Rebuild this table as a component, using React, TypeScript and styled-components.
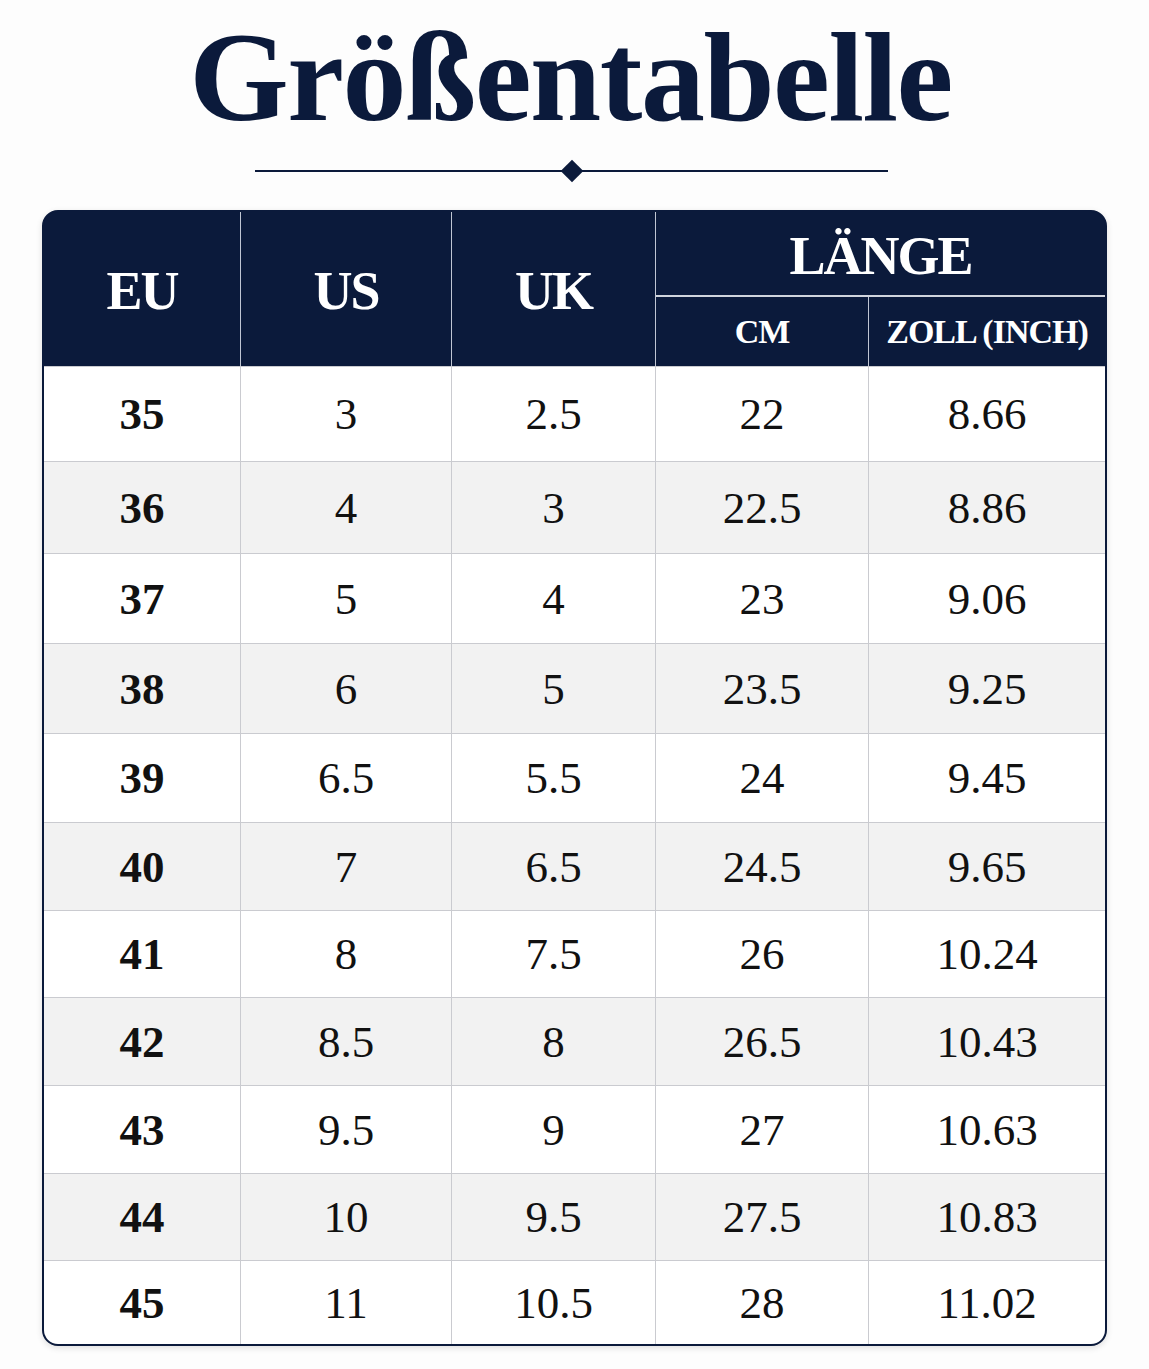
import React from "react";
import styled, { createGlobalStyle } from "styled-components";

const NAVY = "#0b1a3b";

const GlobalStyle = createGlobalStyle`
  html, body {
    margin: 0;
    padding: 0;
    background: #fdfdfd;
  }
  body {
    font-family: "Liberation Serif", "Times New Roman", serif;
  }
`;

const Page = styled.div`
  width: 1149px;
  padding-top: 13px;
  padding-bottom: 21px;
  display: flex;
  flex-direction: column;
  align-items: center;
`;

const Title = styled.h1`
  margin: 0;
  padding-right: 8px;
  font-family: "Liberation Serif", "Times New Roman", serif;
  font-size: 128px;
  line-height: 1;
  font-weight: 700;
  color: ${NAVY};
  letter-spacing: -1.5px;
`;

const Divider = styled.div`
  margin-top: 18px;
  width: 633px;
  height: 24px;
  display: flex;
  align-items: center;
  justify-content: center;
  position: relative;
  transform: translateX(-3px);

  &::before {
    content: "";
    position: absolute;
    left: 0;
    right: 0;
    top: 11px;
    height: 2px;
    background: ${NAVY};
  }
`;

const Diamond = styled.span`
  width: 16px;
  height: 16px;
  background: ${NAVY};
  transform: rotate(45deg);
  position: relative;
`;

const Table = styled.div`
  margin-top: 27px;
  align-self: flex-start;
  margin-left: 42px;
  width: 1065px;
  box-sizing: border-box;
  border: 2px solid ${NAVY};
  border-radius: 16px;
  overflow: hidden;
  background: ${NAVY};
  box-shadow: 0 2px 6px rgba(0, 0, 0, 0.12);
  display: grid;
  grid-template-columns: 197px 211px 204px 213px 1fr;
  grid-template-rows: 85px 69px;
  grid-auto-rows: auto;
`;

const Head = styled.div<{ $span?: string; $rows?: string; $size: number; $last?: boolean; $bottom?: boolean }>`
  grid-column: ${(p) => p.$span || "auto"};
  grid-row: ${(p) => p.$rows || "auto"};
  box-sizing: border-box;
  background: ${NAVY};
  color: #fff;
  font-weight: 700;
  font-size: ${(p) => p.$size}px;
  letter-spacing: ${(p) => (p.$size > 40 ? "-2px" : "-1px")};
  display: flex;
  align-items: center;
  justify-content: center;
  padding-top: ${(p) => (p.$size > 40 ? "4px" : "0")};
  border-right: ${(p) => (p.$last ? "none" : "1.5px solid rgba(225, 229, 238, 0.85)")};
  border-bottom: ${(p) => (p.$bottom ? "2px solid rgba(230, 233, 240, 0.9)" : "none")};
  white-space: nowrap;
`;

const Cell = styled.div<{ $alt: boolean; $bold?: boolean; $last?: boolean; $h: number }>`
  height: ${(p) => p.$h}px;
  box-sizing: border-box;
  background: ${(p) => (p.$alt ? "#f2f2f2" : "#ffffff")};
  border-top: 1px solid #cacbd0;
  border-right: ${(p) => (p.$last ? "none" : "1px solid #cacbd0")};
  color: #111;
  font-size: 45px;
  font-weight: ${(p) => (p.$bold ? 700 : 400)};
  display: flex;
  align-items: center;
  justify-content: center;
`;

const rows: string[][] = [
  ["35", "3", "2.5", "22", "8.66"],
  ["36", "4", "3", "22.5", "8.86"],
  ["37", "5", "4", "23", "9.06"],
  ["38", "6", "5", "23.5", "9.25"],
  ["39", "6.5", "5.5", "24", "9.45"],
  ["40", "7", "6.5", "24.5", "9.65"],
  ["41", "8", "7.5", "26", "10.24"],
  ["42", "8.5", "8", "26.5", "10.43"],
  ["43", "9.5", "9", "27", "10.63"],
  ["44", "10", "9.5", "27.5", "10.83"],
  ["45", "11", "10.5", "28", "11.02"],
];

const heights = [95, 92, 90, 90, 89, 88, 87, 88, 88, 87, 84];

export default function App() {
  return (
    <>
      <GlobalStyle />
      <Page>
        <Title>Größentabelle</Title>
        <Divider>
          <Diamond />
        </Divider>
        <Table>
          <Head $rows="1 / span 2" $size={54}>EU</Head>
          <Head $rows="1 / span 2" $size={54}>US</Head>
          <Head $rows="1 / span 2" $size={54}>UK</Head>
          <Head $span="4 / span 2" $size={54} $last $bottom>
            LÄNGE
          </Head>
          <Head $size={34}>CM</Head>
          <Head $size={34} $last>ZOLL (INCH)</Head>
          {rows.map((r, i) =>
            r.map((v, j) => (
              <Cell key={`${i}-${j}`} $alt={i % 2 === 1} $bold={j === 0} $last={j === 4} $h={heights[i]}>
                {v}
              </Cell>
            ))
          )}
        </Table>
      </Page>
    </>
  );
}
